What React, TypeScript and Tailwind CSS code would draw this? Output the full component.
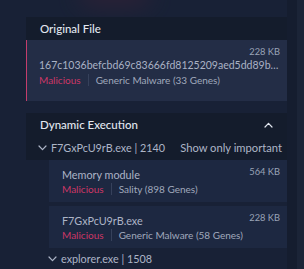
import React from "react";

const font = { fontFamily: 'Lato, "Liberation Sans", sans-serif' };

function Chevron({ up = false, className = "" }: { up?: boolean; className?: string }) {
  return (
    <svg width="9" height="6" viewBox="0 0 9 6" className={className} fill="none">
      <path
        d={up ? "M1 5 L4.5 1.3 L8 5" : "M1 1 L4.5 4.7 L8 1"}
        stroke="currentColor"
        strokeWidth="1.2"
        strokeLinecap="round"
        strokeLinejoin="round"
      />
    </svg>
  );
}

function Verdict({ genes }: { genes: string }) {
  return (
    <div className="flex items-center whitespace-nowrap text-[10px] leading-[14px]">
      <span className="text-[#cc3766]">Malicious</span>
      <span className="mx-[7px] h-[12px] w-px bg-[#36415b]" />
      <span className="text-[#a0a9bc]">{genes}</span>
    </div>
  );
}

function ProcessCard({ name, size, genes }: { name: string; size: string; genes: string }) {
  return (
    <div className="flex h-[42px] flex-col bg-[#1d2841] pl-[13px] pr-[7px] pt-[7px]">
      <div className="flex items-start justify-between">
        <span className="text-[10.8px] leading-[15px] text-[#adb5c7]">{name}</span>
        <span className="-mt-[2px] text-[9.3px] leading-[14px] text-[#9aa3b7]">{size}</span>
      </div>
      <Verdict genes={genes} />
    </div>
  );
}

export default function App() {
  return (
    <div
      className="relative h-[269px] w-[304px] overflow-hidden bg-[#182136]"
      style={font}
    >
      <div className="pointer-events-none absolute left-[80px] top-[-14px] h-[18px] w-[70px] rounded-full bg-[#5a2238] opacity-40 blur-md" />
      <div className="absolute right-0 top-0 h-full w-[17px] bg-[#151d2f]" />
      <div className="absolute right-0 top-0 h-full w-[7px] bg-[#1b2437]" />
      <div className="relative ml-[26px] w-[261px] pt-[17px]">
        {/* Original File */}
        <div className="flex h-[23px] items-center bg-[#141c2c] pl-[14px] text-[11.5px] font-medium text-[#e2e7f0]">
          Original File
        </div>
        <div className="flex h-[61px] flex-col border-l border-[#c43d6c] bg-[#232d46] pl-[12px] pr-[7px] pt-[6px]">
          <div className="text-right text-[9.3px] leading-[12px] text-[#9aa3b7]">228 KB</div>
          <div className="truncate text-[10.5px] leading-[14px] text-[#aab2c5]">
            167c1036befcbd69c83666fd8125209aed5dd89b4f0e1a
          </div>
          <div className="mt-[1px]">
            <Verdict genes="Generic Malware (33 Genes)" />
          </div>
        </div>

        {/* Dynamic Execution */}
        <div className="mt-[12px] bg-[#141c2c]">
          <div className="flex h-[23px] items-center justify-between pl-[14px] pr-[14px] text-[11.5px] font-medium text-[#e2e7f0]">
            <span>Dynamic Execution</span>
            <Chevron up className="text-[#e2e7f0]" />
          </div>
          <div className="flex h-[24px] items-center justify-between whitespace-nowrap pl-[12px] pr-[5px] text-[#adb5c7]">
            <span className="flex items-center gap-[4px]">
              <Chevron />
              <span className="text-[10.8px]">F7GxPcU9rB.exe | 2140</span>
            </span>
            <span className="text-[11.2px]">Show only important</span>
          </div>
        </div>
        <div className="ml-[23px] flex flex-col gap-[4px]">
          <ProcessCard name="Memory module" size="564 KB" genes="Sality (898 Genes)" />
          <ProcessCard name="F7GxPcU9rB.exe" size="228 KB" genes="Generic Malware (58 Genes)" />
        </div>
        <div className="ml-[22px] mt-[2px] flex h-[18px] items-center gap-[4px] text-[10.8px] text-[#adb5c7]">
          <Chevron />
          <span>explorer.exe | 1508</span>
        </div>
      </div>
    </div>
  );
}
